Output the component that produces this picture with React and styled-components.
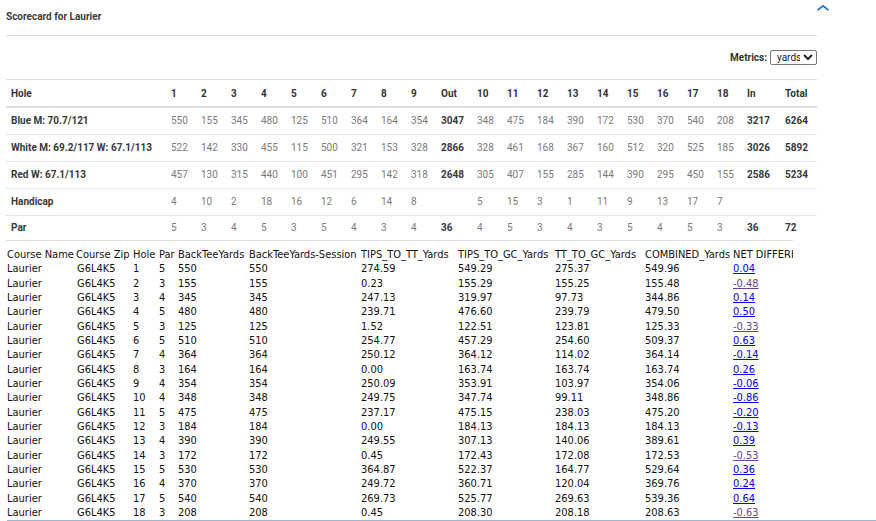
import styled, { createGlobalStyle } from 'styled-components';
import { useState } from 'react';

const GlobalStyle = createGlobalStyle`
  html, body {
    margin: 0;
    padding: 0;
    background: #fff;
    overflow: hidden;
  }
`;

const Page = styled.div`
  position: relative;
  padding-left: 6px;
  font-family: Roboto, "Liberation Sans", sans-serif;
`;

const Collapse = styled.button`
  position: absolute;
  top: 5px;
  left: 816px;
  width: 14px;
  height: 6px;
  padding: 0;
  border: 0;
  background: none;
  cursor: pointer;
  svg { display: block; }
`;

const Card = styled.section`
  width: 811px;
`;

const Title = styled.h2`
  margin: 0;
  height: 36px;
  line-height: 33px;
  font-size: 10px;
  font-weight: 700;
  color: #3c3c3c;
  border-bottom: 1px solid #dedede;
  box-sizing: border-box;
`;

const Toolbar = styled.div`
  display: flex;
  justify-content: flex-end;
  align-items: center;
  gap: 3px;
  height: 43px;
`;

const Label = styled.label`
  font-size: 10px;
  font-weight: 700;
  color: #333;
`;

const Select = styled.select`
  width: 47px;
  height: 15px;
  padding: 0 0 0 2px;
  font-family: Roboto, "Liberation Sans", sans-serif;
  font-size: 10px;
  color: #222;
  border: 1px solid #767676;
  border-radius: 2px;
  background: #fff;
`;

const Table = styled.table`
  width: 811px;
  table-layout: fixed;
  border-collapse: collapse;
  border-top: 1px solid #dedede;
  font-size: 10px;
`;

const Head = styled.th`
  height: 26px;
  padding: 0 0 0 5px;
  text-align: left;
  font-weight: 700;
  color: #333;
  border-bottom: 2px solid #dcdcdc;
  white-space: nowrap;
`;

const Row = styled.tr`
  border-bottom: ${p => (p.last ? '0' : '1px solid #e4e4e4')};
  height: ${p => (p.last ? '25px' : '27px')};
`;

const Cell = styled.td`
  padding: 0 0 0 5px;
  white-space: nowrap;
  font-weight: ${p => (p.strong ? 700 : 400)};
  color: ${p => (p.strong ? '#383838' : '#7a7a7a')};
`;

const DataBox = styled.div`
  width: 787px;
  overflow: hidden;
  border-top: 1px solid #dedede;
  padding-top: 7px;
`;

const DataTable = styled.table`
  width: 846px;
  table-layout: fixed;
  border-collapse: collapse;
  font-family: "DejaVu Sans Condensed", "DejaVu Sans", sans-serif;
  font-stretch: condensed;
  font-size: 11px;
  color: #111;
  tr { height: 14.33px; }
`;

const DataHead = styled.th`
  padding: 0 0 0 1px;
  font-weight: 400;
  text-align: left;
  white-space: nowrap;
  line-height: 14px;
`;

const DataCell = styled.td`
  padding: 0 0 0 ${p => (p.indent ? '2px' : '1px')};
  white-space: nowrap;
  line-height: 14px;
`;

const NetLink = styled.a`
  color: ${p => (p.visited ? '#6b3fa0' : '#0000ee')};
  text-decoration: underline;
`;

const Grid = styled.div`
  display: flex;
  height: 6px;
  margin-left: 1px;
  border-top: 1px solid #9fb4cd;
`;

const GridCol = styled.div`
  width: ${p => p.w}px;
  border-right: 1px solid #9fb4cd;
  flex: ${p => (p.w ? 'none' : '1')};
  ${p => !p.w && 'border-right: 0;'}
`;

const front = ['1', '2', '3', '4', '5', '6', '7', '8', '9'];
const back = ['10', '11', '12', '13', '14', '15', '16', '17', '18'];

const tees = [
  { name: 'Blue M: 70.7/121', f: [550, 155, 345, 480, 125, 510, 364, 164, 354], out: 3047, b: [348, 475, 184, 390, 172, 530, 370, 540, 208], in: 3217, total: 6264 },
  { name: 'White M: 69.2/117 W: 67.1/113', f: [522, 142, 330, 455, 115, 500, 321, 153, 328], out: 2866, b: [328, 461, 168, 367, 160, 512, 320, 525, 185], in: 3026, total: 5892 },
  { name: 'Red W: 67.1/113', f: [457, 130, 315, 440, 100, 451, 295, 142, 318], out: 2648, b: [305, 407, 155, 285, 144, 390, 295, 450, 155], in: 2586, total: 5234 },
  { name: 'Handicap', f: [4, 10, 2, 18, 16, 12, 6, 14, 8], out: '', b: [5, 15, 3, 1, 11, 9, 13, 17, 7], in: '', total: '' },
  { name: 'Par', f: [5, 3, 4, 5, 3, 5, 4, 3, 4], out: 36, b: [4, 5, 3, 4, 3, 5, 4, 5, 3], in: 36, total: 72 },
];

const pars = [5, 3, 4, 5, 3, 5, 4, 3, 4, 4, 5, 3, 4, 3, 5, 4, 5, 3];
const yards = [550, 155, 345, 480, 125, 510, 364, 164, 354, 348, 475, 184, 390, 172, 530, 370, 540, 208];
const tipsTT = ['274.59', '0.23', '247.13', '239.71', '1.52', '254.77', '250.12', '0.00', '250.09', '249.75', '237.17', '0.00', '249.55', '0.45', '364.87', '249.72', '269.73', '0.45'];
const tipsGC = ['549.29', '155.29', '319.97', '476.60', '122.51', '457.29', '364.12', '163.74', '353.91', '347.74', '475.15', '184.13', '307.13', '172.43', '522.37', '360.71', '525.77', '208.30'];
const ttGC = ['275.37', '155.25', '97.73', '239.79', '123.81', '254.60', '114.02', '163.74', '103.97', '99.11', '238.03', '184.13', '140.06', '172.08', '164.77', '120.04', '269.63', '208.18'];
const combined = ['549.96', '155.48', '344.86', '479.50', '125.33', '509.37', '364.14', '163.74', '354.06', '348.86', '475.20', '184.13', '389.61', '172.53', '529.64', '369.76', '539.36', '208.63'];
const net = ['0.04', '-0.48', '0.14', '0.50', '-0.33', '0.63', '-0.14', '0.26', '-0.06', '-0.86', '-0.20', '-0.13', '0.39', '-0.53', '0.36', '0.24', '0.64', '-0.63'];
const seen = ['-0.48', '-0.33', '-0.53', '-0.63'];

const dataCols = [
  ['Course Name', 69], ['Course Zip', 57], ['Hole', 26], ['Par', 19], ['BackTeeYards', 71],
  ['BackTeeYards-Session', 112], ['TIPS_TO_TT_Yards', 97], ['TIPS_TO_GC_Yards', 97],
  ['TT_TO_GC_Yards', 90], ['COMBINED_Yards', 88], ['NET DIFFERENCE', 120],
];

function App() {
  const [metric, setMetric] = useState('yards');

  return (
    <Page>
      <GlobalStyle />
      <Collapse aria-label="collapse">
        <svg width="14" height="6" viewBox="0 0 14 6">
          <polyline points="1.5,5.2 7,0.8 12.5,5.2" fill="none" stroke="#1a6fd1" strokeWidth="1.7" />
        </svg>
      </Collapse>
      <Card>
        <Title>Scorecard for Laurier</Title>
        <Toolbar>
          <Label htmlFor="metric">Metrics:</Label>
          <Select id="metric" value={metric} onChange={e => setMetric(e.target.value)}>
            <option value="yards">yards</option>
            <option value="meters">meters</option>
          </Select>
        </Toolbar>
        <Table>
          <colgroup>
            <col style={{ width: 160 }} />
            {front.map(h => <col key={h} style={{ width: 30 }} />)}
            <col style={{ width: 36 }} />
            {back.map(h => <col key={h} style={{ width: 30 }} />)}
            <col style={{ width: 38 }} />
            <col style={{ width: 37 }} />
          </colgroup>
          <thead>
            <tr>
              <Head>Hole</Head>
              {front.map(h => <Head key={h}>{h}</Head>)}
              <Head>Out</Head>
              {back.map(h => <Head key={h}>{h}</Head>)}
              <Head>In</Head>
              <Head>Total</Head>
            </tr>
          </thead>
          <tbody>
            {tees.map((t, i) => (
              <Row key={t.name} last={i === tees.length - 1}>
                <Cell strong>{t.name}</Cell>
                {t.f.map((v, j) => <Cell key={j}>{v}</Cell>)}
                <Cell strong>{t.out}</Cell>
                {t.b.map((v, j) => <Cell key={j}>{v}</Cell>)}
                <Cell strong>{t.in}</Cell>
                <Cell strong>{t.total}</Cell>
              </Row>
            ))}
          </tbody>
        </Table>
      </Card>
      <DataBox>
        <DataTable>
          <colgroup>
            {dataCols.map(([name, w]) => <col key={name} style={{ width: w }} />)}
          </colgroup>
          <thead>
            <tr>
              {dataCols.map(([name]) => <DataHead key={name}>{name}</DataHead>)}
            </tr>
          </thead>
          <tbody>
            {pars.map((par, i) => (
              <tr key={i}>
                <DataCell>Laurier</DataCell>
                <DataCell indent>G6L4K5</DataCell>
                <DataCell>{i + 1}</DataCell>
                <DataCell>{par}</DataCell>
                <DataCell>{yards[i]}</DataCell>
                <DataCell>{yards[i]}</DataCell>
                <DataCell>{tipsTT[i]}</DataCell>
                <DataCell>{tipsGC[i]}</DataCell>
                <DataCell>{ttGC[i]}</DataCell>
                <DataCell>{combined[i]}</DataCell>
                <DataCell>
                  <NetLink href="#" visited={seen.includes(net[i])}>{net[i]}</NetLink>
                </DataCell>
              </tr>
            ))}
          </tbody>
        </DataTable>
      </DataBox>
      <Grid>
        <GridCol w={60} />
        <GridCol w={60} />
        <GridCol w={33} />
        <GridCol />
      </Grid>
    </Page>
  );
}

export default App;
